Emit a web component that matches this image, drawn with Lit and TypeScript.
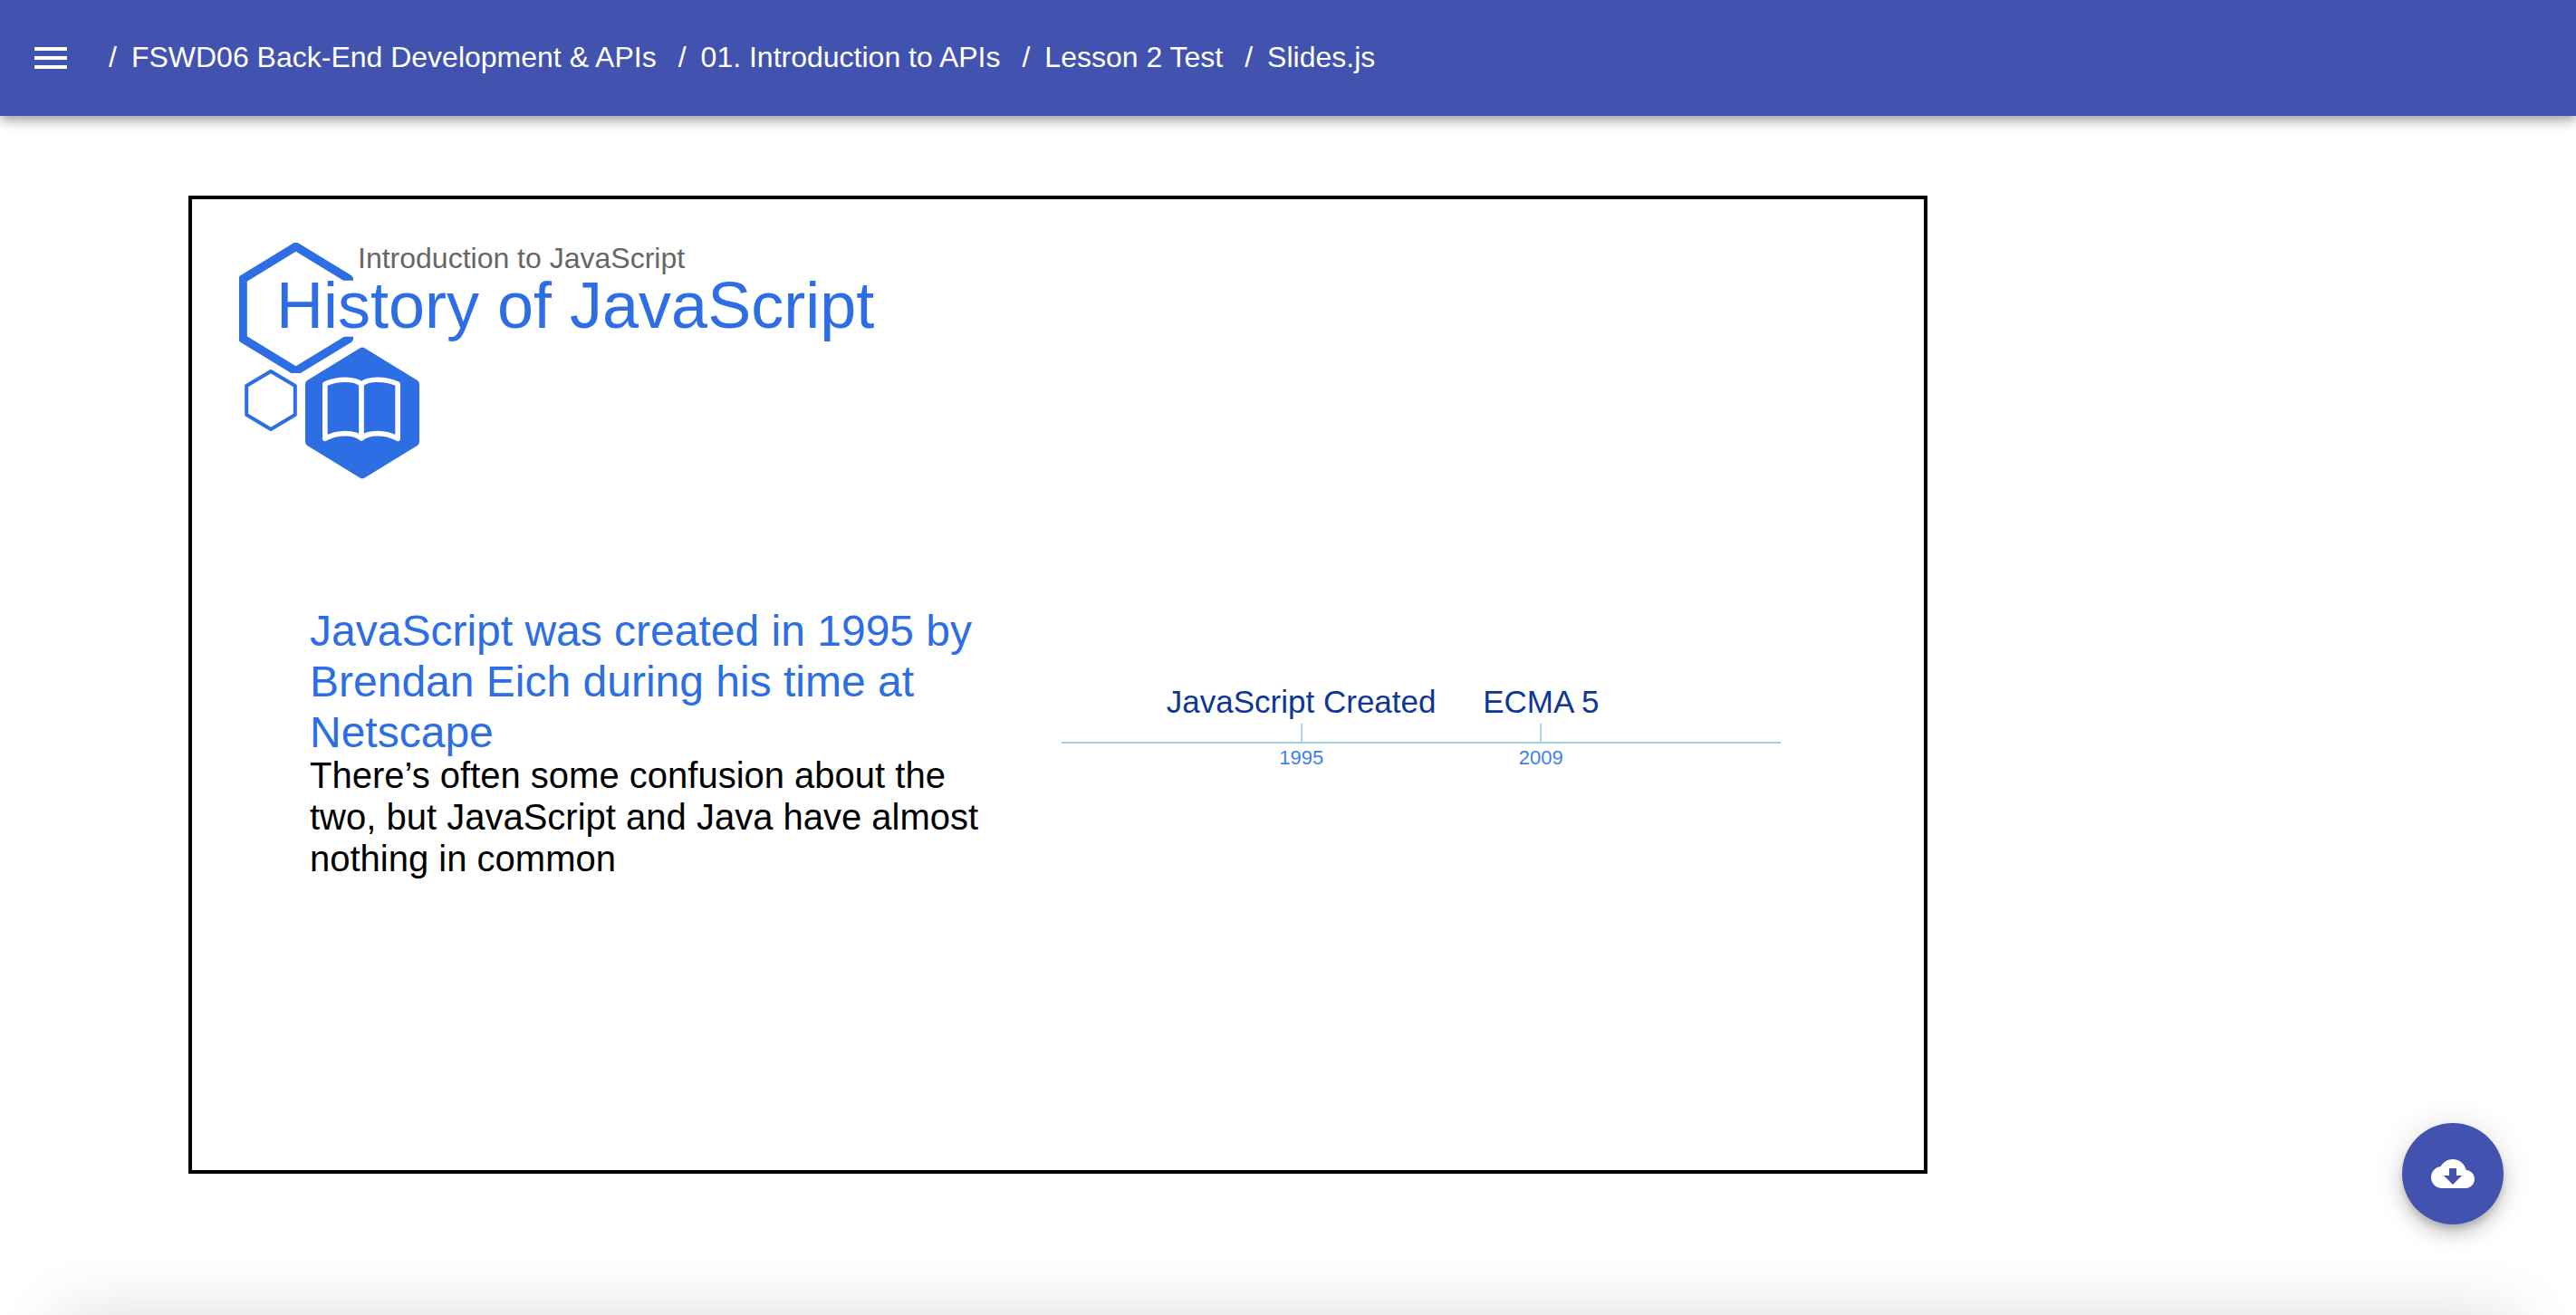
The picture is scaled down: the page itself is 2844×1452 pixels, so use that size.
import { LitElement, html, css, svg } from "lit";
import { customElement, property } from "lit/decorators.js";

interface TimelineEvent {
  label: string;
  year: string;
}

@customElement("app-bar")
class AppBar extends LitElement {
  @property({ attribute: false }) crumbs: string[] = [];

  static styles = css`
    :host {
      display: block;
    }
    .bar {
      display: flex;
      align-items: center;
      gap: 40px;
      height: 128px;
      padding: 0 32px;
      box-sizing: border-box;
      background: #4252af;
      color: #fff;
      box-shadow: 0 4px 8px -2px rgba(0, 0, 0, 0.2), 0 8px 10px rgba(0, 0, 0, 0.14),
        0 2px 20px rgba(0, 0, 0, 0.12);
    }
    .menu {
      display: flex;
      padding: 0;
      border: 0;
      background: none;
      color: inherit;
      cursor: pointer;
    }
    .icon {
      width: 48px;
      height: 48px;
      fill: currentColor;
    }
    .crumbs {
      display: flex;
      flex-wrap: wrap;
      margin: 0;
      padding: 0 0 2px;
      list-style: none;
      font-size: 32px;
      line-height: 40px;
    }
    .crumb {
      display: flex;
      gap: 16px;
      margin-right: 24px;
    }
    .crumb::before {
      content: "/";
    }
    .link {
      color: inherit;
      text-decoration: none;
    }
  `;

  render() {
    return html`
      <header class="bar">
        <button class="menu" aria-label="Open menu">
          <svg class="icon" viewBox="0 0 24 24" aria-hidden="true">
            <path d="M3 18h18v-2H3v2zm0-5h18v-2H3v2zm0-7v2h18V6H3z" />
          </svg>
        </button>
        <nav aria-label="Breadcrumb">
          <ol class="crumbs">
            ${this.crumbs.map(
              (c) => html`<li class="crumb"><a class="link" href="#">${c}</a></li>`
            )}
          </ol>
        </nav>
      </header>
    `;
  }
}

@customElement("slide-timeline")
class SlideTimeline extends LitElement {
  @property({ attribute: false }) events: TimelineEvent[] = [];

  static styles = css`
    :host {
      display: block;
    }
    /* Equal rows above and below keep the axis on the vertical centre. */
    .timeline {
      display: grid;
      grid-template-rows: 1fr 2px 1fr;
      grid-template-columns: repeat(6, minmax(0, 1fr));
    }
    .axis {
      grid-row: 2;
      grid-column: 1 / -1;
      background: #a0d3e2;
    }
    .event {
      grid-row: 1 / 4;
      display: grid;
      grid-template-rows: subgrid;
      justify-items: center;
      white-space: nowrap;
    }
    /* The two events are centred on the thirds of the axis. */
    .event:first-of-type {
      grid-column: 2 / span 2;
    }
    .event:last-of-type {
      grid-column: 4 / span 2;
    }
    .label {
      display: flex;
      flex-direction: column;
      align-items: center;
      gap: 4px;
      width: 0;
      font-size: 35px;
      line-height: 40px;
      color: #0d3795;
    }
    .label::after {
      content: "";
      width: 2px;
      height: 20px;
      background: #a9d8e6;
    }
    .year {
      grid-row: 3;
      padding-top: 4px;
      font-size: 22px;
      line-height: 24px;
      color: #3f7df0;
    }
  `;

  render() {
    return html`
      <div class="timeline">
        <span class="axis"></span>
        ${this.events.map(
          (e) => html`
            <div class="event">
              <span class="label">${e.label}</span>
              <time class="year">${e.year}</time>
            </div>
          `
        )}
      </div>
    `;
  }
}

const emblem = svg`
  <defs>
    <clipPath id="opening">
      <path d="M180 200H600V329H520V515H600V636H180Z" />
    </clipPath>
  </defs>
  <g fill="none" stroke="currentColor" stroke-linejoin="round">
    <path
      clip-path="url(#opening)"
      stroke-width="28"
      d="M556 340V324L380 217L204.5 324V522L380 629L556 522V506"
    />
    <path stroke-width="12" d="M297 630L377.500 678V774L297 822L216.500 774V678Z" />
    <path
      fill="currentColor"
      stroke-width="28"
      d="M600 565L775 672V864L600 971L425 864V672Z"
    />
    <path
      stroke="#fff"
      stroke-width="17"
      d="M597 673C575 653 520 653 476.500 672V853C520 829 575 832 597 852C619 832 674 829 717.500 853V672C674 653 619 653 597 673V852"
    />
  </g>
`;

@customElement("lesson-slide")
class LessonSlide extends LitElement {
  static styles = css`
    :host {
      display: block;
    }
    .slide {
      box-sizing: border-box;
      max-width: 1920px;
      aspect-ratio: 16 / 9;
      padding: 48px 52px;
      border: 4px solid #000;
    }
    /* The emblem and the titles share one cell, titles on top. */
    .head {
      display: grid;
      justify-items: start;
      align-items: start;
      color: #2d6ee5;
    }
    .emblem,
    .titles {
      grid-area: 1 / 1;
    }
    .emblem {
      width: 200px;
      height: 262px;
    }
    .titles {
      padding-left: 41px;
    }
    .topic {
      margin: 0;
      padding-left: 90px;
      font-size: 32px;
      line-height: 34px;
      color: #666;
    }
    .title {
      margin: 0;
      font-size: 72px;
      font-weight: 400;
      line-height: 70px;
    }
    .body {
      display: grid;
      grid-template-columns: 1fr 1fr;
      align-items: center;
      gap: 36px;
      margin-top: 139px;
      padding: 0 106px 0 78px;
    }
    .copy {
      padding-right: 48px;
    }
    .lead {
      margin: 0;
      font-size: 48px;
      font-weight: 400;
      line-height: 56px;
      color: #2d6ee5;
    }
    .note {
      margin: -4px 0 0;
      font-size: 40px;
      line-height: 46px;
      color: #000;
    }
  `;

  private events: TimelineEvent[] = [
    { label: "JavaScript Created", year: "1995" },
    { label: "ECMA 5", year: "2009" },
  ];

  render() {
    return html`
      <article class="slide">
        <div class="head">
          <svg class="emblem" viewBox="192 204 600 786" aria-hidden="true">${emblem}</svg>
          <div class="titles">
            <p class="topic">Introduction to JavaScript</p>
            <h1 class="title">History of JavaScript</h1>
          </div>
        </div>
        <div class="body">
          <div class="copy">
            <h2 class="lead">
              JavaScript was created in 1995 by Brendan Eich during his time at Netscape
            </h2>
            <p class="note">
              There’s often some confusion about the two, but JavaScript and Java have almost
              nothing in common
            </p>
          </div>
          <slide-timeline .events=${this.events}></slide-timeline>
        </div>
      </article>
    `;
  }
}

@customElement("app-root")
class AppRoot extends LitElement {
  static styles = css`
    :host {
      display: block;
      min-height: 100vh;
      background: #fff;
      font-family: "Liberation Sans", Arial, Helvetica, sans-serif;
    }
    .main {
      padding: 88px 208px 100px;
    }
    .download {
      position: fixed;
      right: 80px;
      bottom: 100px;
      display: flex;
      align-items: center;
      justify-content: center;
      width: 112px;
      height: 112px;
      padding: 0;
      border: 0;
      border-radius: 50%;
      background: #4252af;
      color: #fff;
      cursor: pointer;
      box-shadow: 0 6px 10px -2px rgba(0, 0, 0, 0.2), 0 12px 20px rgba(0, 0, 0, 0.14),
        0 2px 36px rgba(0, 0, 0, 0.12);
    }
    .icon {
      width: 48px;
      height: 48px;
      fill: currentColor;
    }
    /* Collapsed bottom sheet: only its shadow reaches into the window. */
    .sheet {
      position: fixed;
      left: 64px;
      right: 64px;
      top: 100%;
      height: 160px;
      box-shadow: 0 0 72px rgba(0, 0, 0, 0.14);
      pointer-events: none;
    }
  `;

  private crumbs = [
    "FSWD06 Back-End Development & APIs",
    "01. Introduction to APIs",
    "Lesson 2 Test",
    "Slides.js",
  ];

  render() {
    return html`
      <app-bar .crumbs=${this.crumbs}></app-bar>
      <main class="main">
        <lesson-slide></lesson-slide>
      </main>
      <div class="sheet"></div>
      <button class="download" aria-label="Download">
        <svg class="icon" viewBox="0 0 24 24" aria-hidden="true">
          <path
            d="M19.350 10.040C18.670 6.590 15.640 4 12 4 9.110 4 6.600 5.640 5.350 8.040 2.340 8.360 0 10.910 0 14c0 3.310 2.690 6 6 6h13c2.760 0 5-2.240 5-5 0-2.640-2.050-4.780-4.650-4.960zM17 13l-5 5-5-5h3V9h4v4h3z"
          />
        </svg>
      </button>
    `;
  }
}
